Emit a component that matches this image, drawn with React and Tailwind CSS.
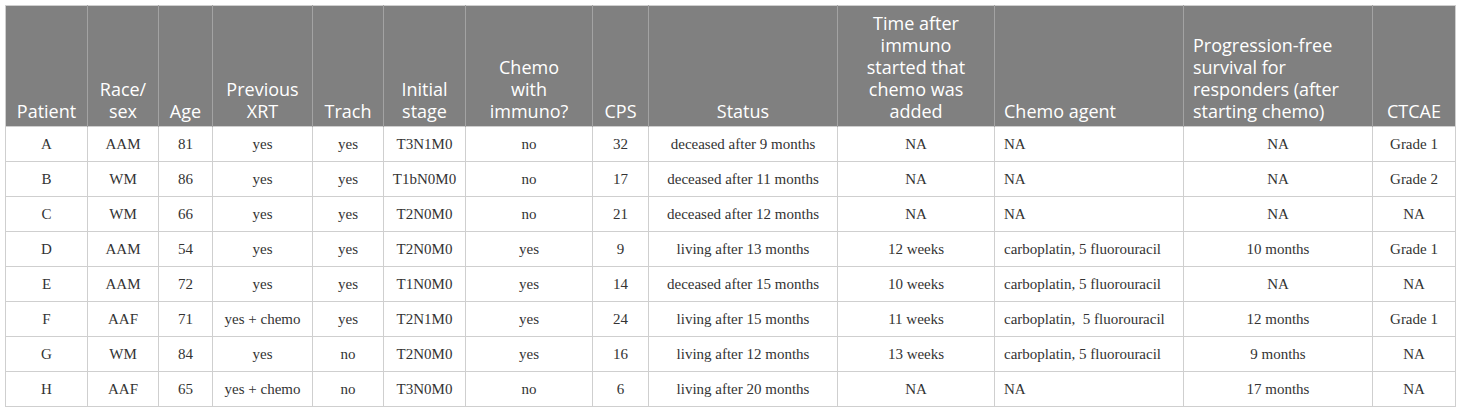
import React from "react";

const cols = [82, 71, 54, 100, 71, 82, 127, 56, 189, 157, 189, 189, 83];

const headers = [
  { t: ["Patient"], a: "text-center" },
  { t: ["Race/", "sex"], a: "text-center" },
  { t: ["Age"], a: "text-center" },
  { t: ["Previous", "XRT"], a: "text-center" },
  { t: ["Trach"], a: "text-center" },
  { t: ["Initial", "stage"], a: "text-center" },
  { t: ["Chemo", "with", "immuno?"], a: "text-center" },
  { t: ["CPS"], a: "text-center" },
  { t: ["Status"], a: "text-center" },
  { t: ["Time after", "immuno", "started that", "chemo was", "added"], a: "text-center" },
  { t: ["Chemo agent"], a: "text-left" },
  { t: ["Progression-free", "survival for", "responders (after", "starting chemo)"], a: "text-left" },
  { t: ["CTCAE"], a: "text-center" },
];

const rows = [
  ["A", "AAM", "81", "yes", "yes", "T3N1M0", "no", "32", "deceased after 9 months", "NA", "NA", "NA", "Grade 1"],
  ["B", "WM", "86", "yes", "yes", "T1bN0M0", "no", "17", "deceased after 11 months", "NA", "NA", "NA", "Grade 2"],
  ["C", "WM", "66", "yes", "yes", "T2N0M0", "no", "21", "deceased after 12 months", "NA", "NA", "NA", "NA"],
  ["D", "AAM", "54", "yes", "yes", "T2N0M0", "yes", "9", "living after 13 months", "12 weeks", "carboplatin, 5 fluorouracil", "10 months", "Grade 1"],
  ["E", "AAM", "72", "yes", "yes", "T1N0M0", "yes", "14", "deceased after 15 months", "10 weeks", "carboplatin, 5 fluorouracil", "NA", "NA"],
  ["F", "AAF", "71", "yes + chemo", "yes", "T2N1M0", "yes", "24", "living after 15 months", "11 weeks", "carboplatin,  5 fluorouracil", "12 months", "Grade 1"],
  ["G", "WM", "84", "yes", "no", "T2N0M0", "yes", "16", "living after 12 months", "13 weeks", "carboplatin, 5 fluorouracil", "9 months", "NA"],
  ["H", "AAF", "65", "yes + chemo", "no", "T3N0M0", "no", "6", "living after 20 months", "NA", "NA", "17 months", "NA"],
];

export default function App() {
  return (
    <div className="w-[1460px] h-[411px] bg-white pt-[5px] pl-[5px]">
      <table className="table-fixed border-collapse w-[1450px] border border-[#cfcfcf]">
        <colgroup>
          {cols.map((w, i) => (
            <col key={i} style={{ width: w }} />
          ))}
        </colgroup>
        <thead>
          <tr className="h-[121px] bg-[#808080]">
            {headers.map((h, i) => (
              <th
                key={i}
                className={`align-bottom font-normal text-white text-[18px] leading-[22px] pb-[4px] ${h.a === "text-left" ? "text-left pl-[9px]" : "text-center px-[2px]"} border-l border-[#a3a3a3] first:border-l-0 whitespace-nowrap`}
                style={{ fontFamily: '"Open Sans", sans-serif' }}
              >
                {h.t.map((l, j) => (
                  <div key={j}>{l}</div>
                ))}
              </th>
            ))}
          </tr>
        </thead>
        <tbody>
          {rows.map((r, ri) => (
            <tr key={ri} className="h-[35px]">
              {r.map((c, ci) => (
                <td
                  key={ci}
                  className={`border border-[#cfcfcf] text-[15px] text-[#333] align-middle whitespace-pre ${ci === 10 ? "text-left pl-[9px]" : "text-center"}`}
                  style={{ fontFamily: '"Liberation Serif", serif' }}
                >
                  {c}
                </td>
              ))}
            </tr>
          ))}
        </tbody>
      </table>
    </div>
  );
}
